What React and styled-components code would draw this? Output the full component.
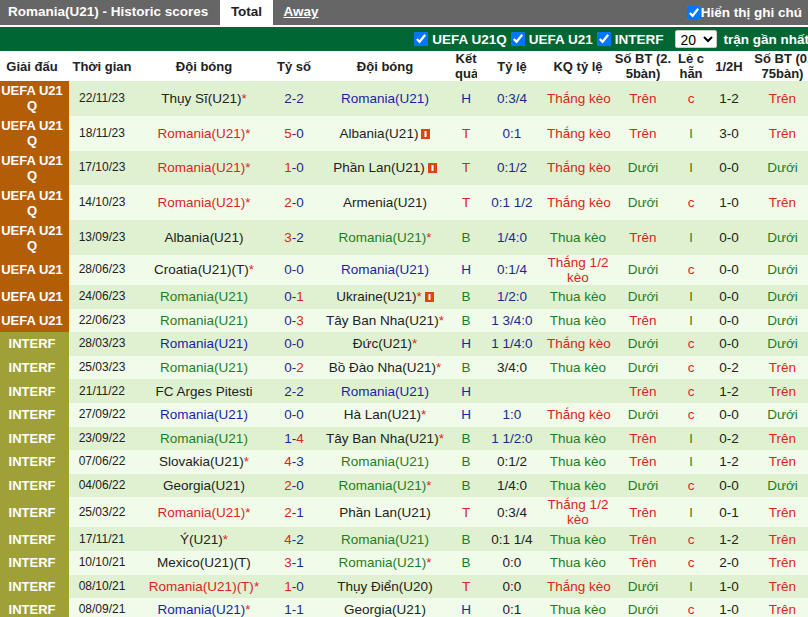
import React from "react";
import styled, { createGlobalStyle } from "styled-components";

const Global = createGlobalStyle`
  html, body { margin: 0; padding: 0; overflow: hidden; background: #fff; }
  body { font-family: "Liberation Sans", Arial, sans-serif; font-size: 13.5px; color: #222; }
`;

const TONE = { r: "#dc2420", g: "#1e7e1e", b: "#1c1cb0", d: "#222222", n: "#1c2a90" };

const Page = styled.div`
  width: 808px;
  height: 617px;
  overflow: hidden;
`;
const Inner = styled.div`
  width: 812px;
`;
const TitleBar = styled.div`
  display: flex;
  align-items: stretch;
  height: 25px;
  background: #666666;
  color: #fff;
  font-weight: bold;
  font-size: 13.5px;
`;
const Title = styled.div`
  width: 220px;
  padding-left: 8px;
  box-sizing: border-box;
  line-height: 23px;
  white-space: nowrap;
`;
const Tab = styled.div`
  width: ${(p) => p.$w}px;
  text-align: center;
  line-height: 23px;
  background: ${(p) => (p.$active ? "#fff" : "transparent")};
  color: ${(p) => (p.$active ? "#222" : "#fff")};
  text-decoration: ${(p) => (p.$active ? "none" : "underline")};
`;
const Notes = styled.label`
  margin-left: auto;
  margin-right: 10px;
  display: flex;
  align-items: center;
  white-space: nowrap;
`;
const Check = styled.input.attrs({ type: "checkbox" })`
  width: 14px;
  height: 14px;
  margin: 0 ${(p) => p.$gap ?? 4}px 0 0;
  flex: none;
`;
const FilterBar = styled.div`
  margin-top: 2px;
  height: 24px;
  background: #006633;
  color: #fff;
  font-weight: bold;
  font-size: 13.5px;
  display: flex;
  align-items: center;
  justify-content: flex-end;
  padding-right: 3px;
  white-space: nowrap;
`;
const Filter = styled.label`
  display: flex;
  align-items: center;
  margin-right: ${(p) => p.$mr ?? 4}px;
`;
const Count = styled.select`
  width: 42px;
  height: 18px;
  margin-right: 6px;
  padding: 0;
  font-family: "Liberation Sans", Arial, sans-serif;
  font-size: 14px;
  background: #fff;
  border: 1px solid #ccc;
  border-radius: 2px;
`;
const Table = styled.table`
  width: 812px;
  table-layout: fixed;
  border-collapse: collapse;
  border-spacing: 0;
`;
const Head = styled.th`
  height: 30px;
  padding: 0;
  font-size: 13px;
  font-weight: bold;
  line-height: 15px;
  text-align: center;
  color: #222;
  background: #fff;
  overflow: hidden;
  white-space: nowrap;
  padding-right: ${(p) => (p.$league ? 5 : 0)}px;
`;
const Row = styled.tr`
  height: ${(p) => p.$h}px;
  background: ${(p) => (p.$odd ? "#dff1d1" : "#f1fbe9")};
`;
const League = styled.td`
  padding: 0 5px 0 0;
  background: ${(p) => (p.$kind === "INTERF" ? "#a0a038" : "#b35d07")};
  color: #fff;
  font-size: 13px;
  font-weight: bold;
  line-height: 15px;
  text-align: center;
`;
const Cell = styled.td`
  padding: 0;
  text-align: center;
  white-space: nowrap;
  font-size: ${(p) => p.$size ?? 13.5}px;
  line-height: 15px;
  color: ${(p) => TONE[p.$tone ?? "d"]};
`;
const Star = styled.span`
  color: #dc2420;
`;
const Digit = styled.span`
  color: ${(p) => TONE[p.$tone]};
`;
const Card = styled.svg`
  width: 9px;
  height: 10px;
  margin-left: 3px;
  vertical-align: -1px;
`;

const RedCard = () => (
  <Card viewBox="0 0 9 10">
    <rect width="9" height="10" fill="#dd4410" />
    <rect x="3.5" y="2" width="2" height="6" fill="#fff" />
  </Card>
);

const Team = ({ name, star, card }) => (
  <>
    {name}
    {star && <Star>*</Star>}
    {card && <RedCard />}
  </>
);

const Score = ({ value }) => {
  const [a, b] = value.split("-");
  return (
    <>
      <Digit $tone={+a > +b ? "r" : "n"}>{a}</Digit>
      <Digit $tone="n">-</Digit>
      <Digit $tone={+b > +a ? "r" : "n"}>{b}</Digit>
    </>
  );
};

const Q = "UEFA U21 Q";
const U = "UEFA U21";
const I = "INTERF";
const R = "Romania(U21)";
const L = 34.8;
const W = 30;
const S = 23.6;
const WIN = "Thắng kèo";
const LOSE = "Thua kèo";
const HALF = "Thắng 1/2 kèo";
const UP = "Trên";
const DOWN = "Dưới";

/* league, height, date, home, score, away, result, odds, oddsTone, kq, bt, parity, half, bt2 */
const rows = [
  [Q, L, "22/11/23", { name: "Thụy Sĩ(U21)", star: 1 }, "2-2", { name: R, tone: "b" }, "H", "0:3/4", "n", WIN, UP, "c", "1-2", UP],
  [Q, L, "18/11/23", { name: R, star: 1, tone: "r" }, "5-0", { name: "Albania(U21)", card: 1 }, "T", "0:1", "n", WIN, UP, "l", "3-0", UP],
  [Q, L, "17/10/23", { name: R, star: 1, tone: "r" }, "1-0", { name: "Phần Lan(U21)", card: 1 }, "T", "0:1/2", "n", WIN, DOWN, "l", "0-0", DOWN],
  [Q, L, "14/10/23", { name: R, star: 1, tone: "r" }, "2-0", { name: "Armenia(U21)" }, "T", "0:1 1/2", "n", WIN, DOWN, "c", "1-0", UP],
  [Q, L, "13/09/23", { name: "Albania(U21)" }, "3-2", { name: R, star: 1, tone: "g" }, "B", "1/4:0", "n", LOSE, UP, "l", "0-0", DOWN],
  [U, W, "28/06/23", { name: "Croatia(U21)(T)", star: 1 }, "0-0", { name: R, tone: "b" }, "H", "0:1/4", "n", HALF, DOWN, "c", "0-0", DOWN],
  [U, S, "24/06/23", { name: R, tone: "g" }, "0-1", { name: "Ukraine(U21)", star: 1, card: 1 }, "B", "1/2:0", "n", LOSE, DOWN, "l", "0-0", DOWN],
  [U, S, "22/06/23", { name: R, tone: "g" }, "0-3", { name: "Tây Ban Nha(U21)", star: 1 }, "B", "1 3/4:0", "n", LOSE, UP, "l", "0-0", DOWN],
  [I, S, "28/03/23", { name: R, tone: "b" }, "0-0", { name: "Đức(U21)", star: 1 }, "H", "1 1/4:0", "n", WIN, DOWN, "c", "0-0", DOWN],
  [I, S, "25/03/23", { name: R, tone: "g" }, "0-2", { name: "Bồ Đào Nha(U21)", star: 1 }, "B", "3/4:0", "d", LOSE, DOWN, "c", "0-2", UP],
  [I, S, "21/11/22", { name: "FC Arges Pitesti" }, "2-2", { name: R, tone: "b" }, "H", "", "d", "", UP, "c", "1-2", UP],
  [I, S, "27/09/22", { name: R, tone: "b" }, "0-0", { name: "Hà Lan(U21)", star: 1 }, "H", "1:0", "n", WIN, DOWN, "c", "0-0", DOWN],
  [I, S, "23/09/22", { name: R, tone: "g" }, "1-4", { name: "Tây Ban Nha(U21)", star: 1 }, "B", "1 1/2:0", "n", LOSE, UP, "l", "0-2", UP],
  [I, S, "07/06/22", { name: "Slovakia(U21)", star: 1 }, "4-3", { name: R, tone: "g" }, "B", "0:1/2", "d", LOSE, UP, "l", "1-2", UP],
  [I, S, "04/06/22", { name: "Georgia(U21)" }, "2-0", { name: R, star: 1, tone: "g" }, "B", "1/4:0", "d", LOSE, DOWN, "c", "0-0", DOWN],
  [I, W, "25/03/22", { name: R, star: 1, tone: "r" }, "2-1", { name: "Phần Lan(U21)" }, "T", "0:3/4", "d", HALF, UP, "l", "0-1", UP],
  [I, S, "17/11/21", { name: "Ý(U21)", star: 1 }, "4-2", { name: R, tone: "g" }, "B", "0:1 1/4", "d", LOSE, UP, "c", "1-2", UP],
  [I, S, "10/10/21", { name: "Mexico(U21)(T)" }, "3-1", { name: R, star: 1, tone: "g" }, "B", "0:0", "d", LOSE, UP, "c", "2-0", UP],
  [I, S, "08/10/21", { name: "Romania(U21)(T)", star: 1, tone: "r" }, "1-0", { name: "Thụy Điển(U20)" }, "T", "0:0", "d", WIN, DOWN, "l", "1-0", UP],
  [I, S, "08/09/21", { name: R, star: 1, tone: "b" }, "1-1", { name: "Georgia(U21)" }, "H", "0:1", "d", LOSE, DOWN, "c", "1-0", UP],
];

const widths = [69, 66, 138, 42, 140, 22, 70, 62, 68, 28, 48, 59];
const heads = [
  ["Giải đấu"], ["Thời gian"], ["Đội bóng"], ["Tỷ số"], ["Đội bóng"], ["Kết", "quả"],
  ["Tỷ lệ"], ["KQ tỷ lệ"], ["Số BT (2.", "5bàn)"], ["Lẻ c", "hẵn"], ["1/2H"], ["Số BT (0.", "75bàn)"],
];
const RESULT = { H: "b", T: "r", B: "g" };
const upDown = (v) => (v === UP ? "r" : "g");

export default function App() {
  return (
    <Page>
      <Global />
      <Inner>
        <TitleBar>
          <Title>Romania(U21) - Historic scores</Title>
          <Tab $w={53} $active>Total</Tab>
          <Tab $w={56}>Away</Tab>
          <Notes>
            <Check defaultChecked $gap={0} />
            Hiển thị ghi chú
          </Notes>
        </TitleBar>
        <FilterBar>
          <Filter><Check defaultChecked />UEFA U21Q</Filter>
          <Filter><Check defaultChecked />UEFA U21</Filter>
          <Filter $mr={12}><Check defaultChecked />INTERF</Filter>
          <Count defaultValue="20">
            <option>10</option>
            <option>20</option>
            <option>30</option>
          </Count>
          trận gần nhất
        </FilterBar>
        <Table>
          <colgroup>
            {widths.map((w, i) => <col key={i} width={w} />)}
          </colgroup>
          <thead>
            <tr>
              {heads.map((lines, i) => (
                <Head key={i} $league={i === 0}>
                  {lines.map((t, j) => (
                    <React.Fragment key={j}>{j > 0 && <br />}{t}</React.Fragment>
                  ))}
                </Head>
              ))}
            </tr>
          </thead>
          <tbody>
            {rows.map((r, i) => {
              const [league, h, date, home, score, away, res, odds, oddsTone, kq, bt, par, half, bt2] = r;
              return (
                <Row key={i} $h={h} $odd={i % 2 === 0}>
                  <League $kind={league}>{league}</League>
                  <Cell $size={12}>{date}</Cell>
                  <Cell $tone={home.tone}><Team {...home} /></Cell>
                  <Cell><Score value={score} /></Cell>
                  <Cell $tone={away.tone}><Team {...away} /></Cell>
                  <Cell $tone={RESULT[res]}>{res}</Cell>
                  <Cell $tone={oddsTone}>{odds}</Cell>
                  <Cell $tone={kq === LOSE ? "g" : "r"}>
                    {kq === HALF ? <>Thắng 1/2<br />kèo</> : kq}
                  </Cell>
                  <Cell $tone={upDown(bt)}>{bt}</Cell>
                  <Cell $tone={par === "c" ? "r" : "g"}>{par}</Cell>
                  <Cell>{half}</Cell>
                  <Cell $tone={upDown(bt2)}>{bt2}</Cell>
                </Row>
              );
            })}
          </tbody>
        </Table>
      </Inner>
    </Page>
  );
}
